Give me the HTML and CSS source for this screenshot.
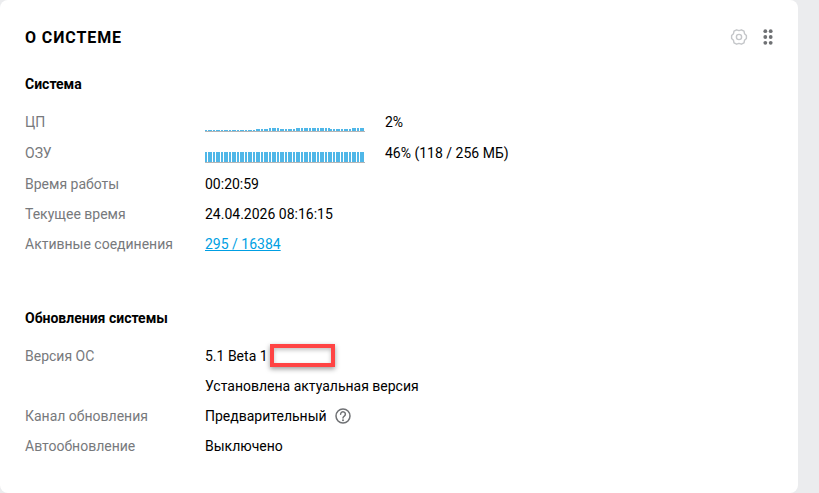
FILE: index.html
```html
<!DOCTYPE html>
<html lang="ru">
<head>
    <meta charset="UTF-8">
    <meta name="viewport" content="width=device-width, initial-scale=1.0">
    <title>О системе</title>
    <link rel="stylesheet" href="styles.css">
</head>
<body>
    <div class="card">
        <div class="card-header">
            <h2 class="card-title">О системе</h2>
            <div class="card-actions">
                <svg class="icon-gear" width="18" height="18" viewBox="0 0 18 18" fill="none" stroke="#c4c6c9" stroke-width="1.4" stroke-linejoin="round">
                    <polygon points="16.4,7.5 16.4,10.5 14.5,12.3 14,14.8 11.4,16.2 9,15.4 6.600,16.200 4,14.800 3.500,12.300 1.600,10.500 1.600,7.500 3.500,5.700 4,3.200 6.600,1.800 9,2.600 11.400,1.800 14,3.200 14.500,5.700"/>
                    <circle cx="9" cy="9" r="2.600"/>
                </svg>
                <svg class="icon-drag" width="10" height="16" viewBox="0 0 10 16" fill="#6f7174">
                    <circle cx="2.300" cy="2.200" r="1.900"/>
                    <circle cx="7.700" cy="2.200" r="1.900"/>
                    <circle cx="2.300" cy="8" r="1.900"/>
                    <circle cx="7.700" cy="8" r="1.900"/>
                    <circle cx="2.300" cy="13.800" r="1.900"/>
                    <circle cx="7.700" cy="13.800" r="1.900"/>
                </svg>
            </div>
        </div>

        <!-- Система -->
        <h3 class="section-title">Система</h3>
        <div class="info-row chart-row">
            <span class="info-label">ЦП</span>
            <div class="load">
                <svg class="load-chart" id="cpu-chart" width="160" height="14"></svg>
                <span>2%</span>
            </div>
        </div>
        <div class="info-row chart-row">
            <span class="info-label">ОЗУ</span>
            <div class="load">
                <svg class="load-chart" id="ram-chart" width="160" height="14"></svg>
                <span>46% (118 / 256 МБ)</span>
            </div>
        </div>
        <div class="info-row">
            <span class="info-label">Время работы</span>
            <span>00:20:59</span>
        </div>
        <div class="info-row">
            <span class="info-label">Текущее время</span>
            <span>24.04.2026 08:16:15</span>
        </div>
        <div class="info-row">
            <span class="info-label">Активные соединения</span>
            <a class="info-link" href="#">295 / 16384</a>
        </div>

        <!-- Обновления -->
        <h3 class="section-title updates">Обновления системы</h3>
        <div class="info-row">
            <span class="info-label">Версия ОС</span>
            <div class="version">
                <span>5.1 Beta 1</span>
                <span class="highlight"></span>
            </div>
        </div>
        <div class="info-row">
            <span class="info-label"></span>
            <span>Установлена актуальная версия</span>
        </div>
        <div class="info-row">
            <span class="info-label">Канал обновления</span>
            <div class="channel">
                <span>Предварительный</span>
                <svg width="16" height="16" viewBox="0 0 16 16" fill="none" stroke="#6f7174" stroke-width="1.500">
                    <circle cx="8" cy="8" r="7"/>
                    <path d="M5.600 6.200a2.400 2.400 0 1 1 3.700 2c-.9.600-1.300 1-1.300 1.800" stroke-linecap="round"/>
                    <circle cx="8" cy="12.200" r="1" fill="#6f7174" stroke="none"/>
                </svg>
            </div>
        </div>
        <div class="info-row">
            <span class="info-label">Автообновление</span>
            <span>Выключено</span>
        </div>
    </div>
    <script src="script.js"></script>
</body>
</html>
```

FILE: styles.css
```css
body {
    font-family: 'Roboto', sans-serif;
    font-size: 14px;
    background-color: #ebecee;
    color: #000000;
    margin: 0;
    height: 493px;
    overflow: hidden;
}

.card {
    box-sizing: border-box;
    width: 798px;
    height: 493px;
    background-color: #ffffff;
    border-radius: 8px;
    padding: 25px 25px 0;
}

.card-header {
    display: flex;
    justify-content: space-between;
    align-items: center;
    height: 24px;
    margin-bottom: 27px;
}

.card-title {
    font-size: 16px;
    font-weight: 700;
    letter-spacing: 0.9px;
    text-transform: uppercase;
    margin: 0;
}

.card-actions {
    display: flex;
    align-items: center;
    gap: 15px;
}

.section-title {
    font-size: 14px;
    font-weight: 700;
    line-height: 16px;
    margin: 0 0 15px;
}

.section-title.updates {
    margin-top: 51px;
    margin-bottom: 15px;
}

.info-row {
    display: flex;
    align-items: center;
    height: 30px;
}

.chart-row {
    box-sizing: border-box;
    height: 31px;
    padding-bottom: 1px;
}

.info-label {
    width: 180px;
    flex-shrink: 0;
    color: #77797c;
}

.load {
    display: flex;
    align-items: center;
    gap: 20px;
}

.load-chart {
    display: block;
    margin-top: 8px;
}

.info-link {
    color: #009fe3;
}

.version {
    display: flex;
    align-items: center;
}

.highlight {
    width: 57px;
    height: 15px;
    margin: -2px 0 0 2px;
    border: 4px solid #ff4444;
    box-shadow: 0 2px 5px rgba(0, 0, 0, 0.4), inset 0 2px 4px rgba(0, 0, 0, 0.25);
}

.channel {
    display: flex;
    align-items: center;
    gap: 8px;
}
```

FILE: script.js
```js
// Load history, one value per bar (px)
var BAR_COUNT = 60;
var BAR_STEP = 160 / BAR_COUNT;

var cpu = [];
for (var i = 0; i < BAR_COUNT; i++) {
    if (i < 19) cpu.push(1);
    else if (i < 24) cpu.push(2);
    else if (i < 28) cpu.push(3);
    else if (i < 34) cpu.push(2);
    else if (i < 47) cpu.push(3);
    else if (i < 55) cpu.push(2);
    else cpu.push(3);
}

var ram = [];
for (var j = 0; j < BAR_COUNT; j++) {
    ram.push(10);
}

function drawChart(id, values) {
    var svg = document.getElementById(id);
    var markup = '';
    values.forEach(function (h, n) {
        markup += '<rect x="' + Math.round(n * BAR_STEP) + '" y="' + (12 - h) + '" width="2" height="' + h + '" fill="#4fb7e8"/>';
    });
    markup += '<rect x="0" y="12" width="160" height="1" fill="#b5b5b5"/>';
    svg.innerHTML = markup;
}

drawChart('cpu-chart', cpu);
drawChart('ram-chart', ram);
```
